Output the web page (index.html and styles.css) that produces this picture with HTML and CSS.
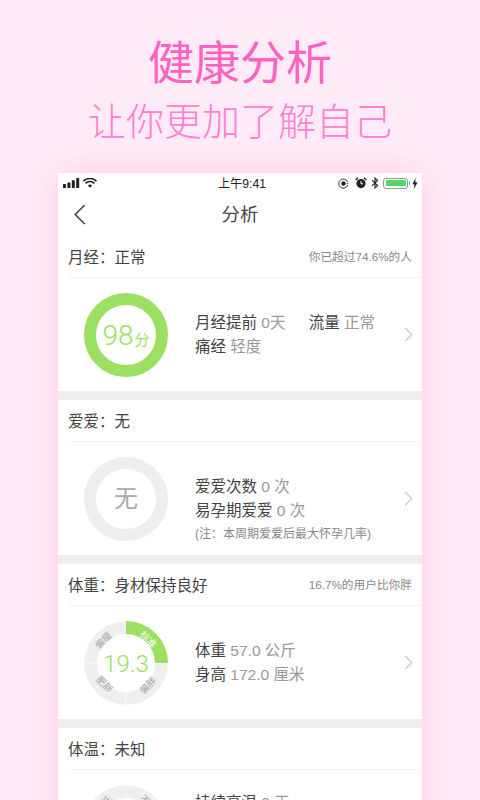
FILE: index.html
```html
<!DOCTYPE html>
<html lang="zh-CN">
  <head>
    <meta charset="UTF-8" />
    <meta name="viewport" content="width=device-width, initial-scale=1.0" />
    <title>健康分析</title>
    <link rel="stylesheet" href="styles.css">
  </head>
  <body>
    <header class="hero">
      <h1>健康分析</h1>
      <h2>让你更加了解自己</h2>
    </header>

    <main class="phone">
      <div class="status-bar">
        <div class="status-left">
          <svg class="signal" viewBox="0 0 17 10">
            <rect x="0" y="6" width="3" height="4" rx="0.6" />
            <rect x="4.4" y="4.4" width="3" height="5.6" rx="0.6" />
            <rect x="8.8" y="2.2" width="3" height="7.8" rx="0.6" />
            <rect x="13.2" y="0" width="3" height="10" rx="0.6" />
          </svg>
          <svg class="wifi" viewBox="0 0 14 10">
            <path d="M0.5 3.2a9.2 9.2 0 0 1 13 0" />
            <path d="M2.6 5.4a6.2 6.2 0 0 1 8.8 0" />
            <path d="M7 9.8 4.9 7.5a3 3 0 0 1 4.2 0z" class="wifi-dot" />
          </svg>
        </div>
        <span class="status-time">上午9:41</span>
        <div class="status-right">
          <svg class="lock" viewBox="0 0 12 12">
            <path d="M10.6 4.6A5 5 0 1 0 10.6 7.6" />
            <path d="M9.4 5.6h2.4l-1.2 1.6z" class="solid" />
            <circle cx="6" cy="6" r="2.4" class="solid" />
          </svg>
          <svg class="alarm" viewBox="0 0 12 12">
            <circle cx="6" cy="6.6" r="4.6" class="solid" />
            <path d="M0.6 3 3 0.8M11.4 3 9 0.8" />
            <path d="M6 4v2.8h2" class="cut" />
          </svg>
          <svg class="bluetooth" viewBox="0 0 8 12">
            <path d="M1 3.2 6.6 8.6 4 11V1L6.6 3.4 1 8.8" />
          </svg>
          <div class="battery"><span class="battery-fill"></span></div>
          <svg class="bolt" viewBox="0 0 6 11">
            <path d="M3.6 0 0.4 6.2h2L1.8 11 5.6 4.4h-2.2z" />
          </svg>
        </div>
      </div>

      <nav class="nav-bar">
        <svg class="back" viewBox="0 0 12 20">
          <path d="M11 1 2 10l9 9" />
        </svg>
        <span class="nav-title">分析</span>
      </nav>

      <section class="card">
        <div class="card-head">
          <span>月经：正常</span>
          <small>你已超过74.6%的人</small>
        </div>
        <div class="card-body">
          <div class="ring ring-green">
            <span class="score">98</span><span class="score-unit">分</span>
          </div>
          <div class="info">
            <p>
              <b>月经提前</b> <i>0天</i>
              <b class="spaced">流量</b> <i>正常</i>
            </p>
            <p><b>痛经</b> <i>轻度</i></p>
          </div>
          <svg class="chevron" viewBox="0 0 9 16"><path d="M1 1l7 7-7 7" /></svg>
        </div>
      </section>

      <section class="card">
        <div class="card-head">
          <span>爱爱：无</span>
        </div>
        <div class="card-body">
          <div class="ring ring-grey"><span class="ring-none">无</span></div>
          <div class="info info-low">
            <p><b>爱爱次数</b> <i>0 次</i></p>
            <p><b>易孕期爱爱</b> <i>0 次</i></p>
            <p class="note">(注：本周期爱爱后最大怀孕几率)</p>
          </div>
          <svg class="chevron" viewBox="0 0 9 16"><path d="M1 1l7 7-7 7" /></svg>
        </div>
      </section>

      <section class="card">
        <div class="card-head">
          <span>体重：身材保持良好</span>
          <small>16.7%的用户比你胖</small>
        </div>
        <div class="card-body">
          <svg class="wheel" viewBox="0 0 84 84">
            <path class="seg" d="M42 42V0A42 42 0 0 0 0 42z" />
            <path class="seg" d="M42 42H0A42 42 0 0 0 42 84z" />
            <path class="seg" d="M42 42V84A42 42 0 0 0 84 42z" />
            <path class="seg-on" d="M42 42V0A42 42 0 0 1 84 42z" />
            <circle class="wheel-hole" cx="42" cy="42" r="29" />
            <text class="seg-label" transform="translate(20 20) rotate(-45)">偏瘦</text>
            <text class="seg-label seg-label-on" transform="translate(63.5 19) rotate(45)">标准</text>
            <text class="seg-label" transform="translate(64.5 65) rotate(-45)">偏胖</text>
            <text class="seg-label" transform="translate(20 64) rotate(45)">肥胖</text>
            <text class="wheel-value" x="42" y="51">19.3</text>
          </svg>
          <div class="info">
            <p><b>体重</b> <i>57.0 公斤</i></p>
            <p><b>身高</b> <i>172.0 厘米</i></p>
          </div>
          <svg class="chevron" viewBox="0 0 9 16"><path d="M1 1l7 7-7 7" /></svg>
        </div>
      </section>

      <section class="card">
        <div class="card-head">
          <span>体温：未知</span>
        </div>
        <div class="card-body">
          <svg class="wheel" viewBox="0 0 84 84">
            <path class="seg" d="M42 42V0A42 42 0 0 0 0 42z" />
            <path class="seg" d="M42 42V0A42 42 0 0 1 84 42z" />
            <circle class="wheel-hole" cx="42" cy="42" r="29" />
            <text class="seg-label" transform="translate(20 20) rotate(-45)">偏低</text>
            <text class="seg-label" transform="translate(63.5 19) rotate(45)">不高</text>
          </svg>
          <div class="info">
            <p><b>持续高温</b> <i>0 天</i></p>
            <p><b>平均体温</b> <i>未知</i></p>
            <p><b>最高体温</b> <i>未知</i></p>
          </div>
        </div>
      </section>
    </main>
  </body>
</html>
```

FILE: styles.css
```css
* {
    box-sizing: border-box;
}
html, body {
    margin: 0;
    height: 800px;
    overflow: hidden;
}
body {
    background-color: #ffebf6;
    font-family: "Liberation Sans", "Noto Sans CJK SC", sans-serif;
    color: #444;
}
.hero {
    height: 173px;
    padding-top: 33px;
    text-align: center;
}
h1 {
    margin: 0;
    font-size: 46px;
    line-height: 60px;
    font-weight: 400;
    color: #ff62c2;
}
h2 {
    margin: 1px 0 0;
    font-size: 38px;
    line-height: 56px;
    font-weight: 300;
    color: #ff80cf;
}
.phone {
    width: 364px;
    height: 660px;
    margin: 0 auto;
    background-color: #eee;
    box-shadow: 0 0 30px rgba(255, 120, 200, 0.25);
}
.status-bar {
    display: flex;
    align-items: center;
    justify-content: space-between;
    position: relative;
    height: 21px;
    padding: 0 4px 1px 5px;
    background-color: #fff;
}
.status-left, .status-right {
    display: flex;
    align-items: center;
}
.signal {
    width: 17px;
    height: 10px;
    fill: #222;
}
.wifi {
    width: 14px;
    height: 10px;
    margin-left: 3px;
    fill: none;
    stroke: #222;
    stroke-width: 1.6;
}
.wifi-dot {
    fill: #222;
    stroke: none;
}
.status-time {
    position: absolute;
    left: 4px;
    right: 0;
    text-align: center;
    font-size: 12.2px;
    color: #222;
}
.status-right svg {
    fill: none;
    stroke: #222;
}
.status-right .solid {
    fill: #222;
    stroke: none;
}
.lock {
    width: 11px;
    height: 11px;
}
.alarm {
    width: 12px;
    height: 12px;
    margin-left: 6px;
    stroke-width: 1.4;
}
.alarm .cut {
    stroke: #fff;
    stroke-width: 1;
}
.bluetooth {
    width: 8px;
    height: 12px;
    margin-left: 4px;
    stroke-width: 1.1;
}
.battery {
    position: relative;
    width: 25px;
    height: 11px;
    margin-left: 4px;
    padding: 1.5px;
    border: 1px solid #999;
    border-radius: 3px;
}
.battery::after {
    content: "";
    position: absolute;
    right: -3px;
    top: 2.5px;
    width: 1.5px;
    height: 4px;
    background-color: #999;
}
.battery-fill {
    display: block;
    height: 100%;
    background-color: #4cd964;
    border-radius: 1px;
}
.status-right .bolt {
    width: 6px;
    height: 11px;
    margin-left: 4px;
    fill: #222;
    stroke: none;
}
.nav-bar {
    display: flex;
    align-items: center;
    justify-content: center;
    position: relative;
    height: 42px;
    padding-bottom: 5px;
    background-color: #fff;
}
.back {
    position: absolute;
    left: 15px;
    top: 10px;
    width: 13px;
    height: 21px;
    fill: none;
    stroke: #444;
    stroke-width: 1.5;
}
.nav-title {
    font-size: 18.5px;
    color: #444;
}
.card {
    margin-bottom: 9px;
    background-color: #fff;
}
.card-head {
    display: flex;
    align-items: center;
    justify-content: space-between;
    height: 42px;
    margin-left: 10px;
    padding: 0 10px 2px 0;
    border-bottom: 1px solid #f4f4f4;
    font-size: 15.5px;
    color: #444;
}
.card-head small {
    font-size: 11.7px;
    color: #888;
}
.card-body {
    display: flex;
    align-items: center;
    height: 113px;
    padding: 0 9px 0 26px;
}
.ring {
    display: flex;
    align-items: center;
    justify-content: center;
    flex: none;
    width: 84px;
    height: 84px;
    border: 12.5px solid;
    border-radius: 50%;
}
.ring-green {
    align-items: baseline;
    padding-top: 17px;
    border-color: #9be060;
    color: #9be060;
}
.ring-grey {
    border-color: #eee;
    color: #aaa;
}
.score {
    font-family: Roboto, sans-serif;
    font-weight: 300;
    font-size: 28px;
    line-height: 1;
}
.score-unit {
    font-size: 15px;
    margin-left: 1px;
}
.ring-none {
    font-size: 24px;
    line-height: 1;
}
.wheel {
    flex: none;
    width: 84px;
    height: 84px;
}
.seg {
    fill: #efefef;
    stroke: #fff;
    stroke-width: 0.5;
}
.seg-on {
    fill: #9be060;
}
.wheel-hole {
    fill: #fff;
}
.seg-label {
    font-size: 9.5px;
    fill: #a5a5a5;
    text-anchor: middle;
    dominant-baseline: middle;
}
.seg-label-on {
    fill: #fff;
}
.wheel-value {
    font-family: Roboto, sans-serif;
    font-weight: 300;
    font-size: 24px;
    fill: #9be060;
    text-anchor: middle;
}
.info {
    flex: 1;
    margin: 1px 0 0 27px;
    font-size: 15.5px;
    line-height: 24px;
}
.info p {
    margin: 0;
}
.info b {
    font-weight: 400;
    color: #444;
}
.info i {
    font-style: normal;
    color: #999;
}
.info .spaced {
    margin-left: 19px;
}
.info-low {
    margin-top: 23px;
}
.info .note {
    font-size: 12px;
    line-height: 22px;
    color: #888;
}
.chevron {
    flex: none;
    width: 9px;
    height: 15px;
    fill: none;
    stroke: #ccc;
    stroke-width: 1.4;
}
```
